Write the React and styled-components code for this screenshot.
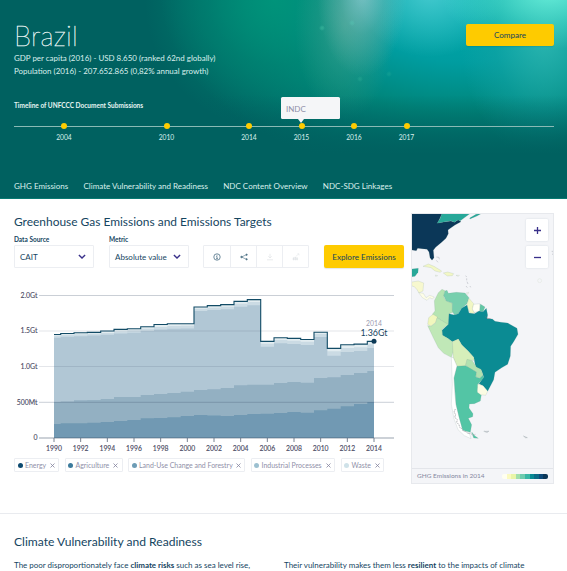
import React from "react";
import styled, { createGlobalStyle } from "styled-components";

const GlobalStyle = createGlobalStyle`
  * { box-sizing: border-box; }
  html, body { margin: 0; padding: 0; overflow: hidden; background: #fff; }
  body { font-family: Lato, "Open Sans", sans-serif; color: #15455f; }
`;

const Page = styled.div`
  width: 567px;
  height: 571px;
  overflow: hidden;
`;

const Header = styled.header`
  height: 199px;
  padding: 0 13px 0 14px;
  display: flex;
  flex-direction: column;
  color: #d9efec;
  border-bottom: 1px solid #077a72;
  background:
    radial-gradient(circle at 322px 28px, rgba(90, 215, 180, 0.3) 0 1px, transparent 3px),
    radial-gradient(circle at 352px 23px, rgba(90, 215, 190, 0.25) 0 1px, transparent 3px),
    radial-gradient(circle at 360px 79px, rgba(60, 190, 160, 0.25) 0 1px, transparent 3px),
    radial-gradient(circle at 389px 74px, rgba(60, 190, 160, 0.2) 0 1px, transparent 3px),
    linear-gradient(180deg, rgba(0, 97, 96, 0) 48%, rgba(0, 97, 96, 0.5) 63%, #006160 78%),
    radial-gradient(ellipse 110px 55px at 550px -6px, rgba(112, 245, 222, 0.85), rgba(80, 225, 205, 0.5) 55%, transparent),
    radial-gradient(ellipse 45px 85px at 362px -8px, rgba(150, 205, 212, 0.75), rgba(130, 190, 190, 0.35) 50%, transparent),
    radial-gradient(ellipse 75px 65px at 430px -8px, rgba(85, 210, 215, 0.8), transparent),
    radial-gradient(ellipse 85px 125px at 545px 35px, rgba(50, 185, 178, 0.85), rgba(20, 165, 165, 0.5) 60%, transparent),
    radial-gradient(ellipse 50px 95px at 345px 25px, rgba(60, 160, 140, 0.8), rgba(50, 155, 135, 0.4) 55%, transparent),
    radial-gradient(ellipse 130px 130px at 275px 0px, rgba(0, 148, 122, 0.95), rgba(0, 138, 115, 0.5) 50%, transparent),
    radial-gradient(ellipse 300px 190px at 460px -10px, #00acb0 0%, #009da0 38%, rgba(0, 138, 125, 0.85) 65%, transparent 100%),
    #006160;
`;

const Hero = styled.div`
  height: 84px;
  display: flex;
  justify-content: space-between;
  padding-top: 20px;
`;

const Country = styled.h1`
  margin: 0;
  font-size: 27.5px;
  line-height: 32px;
  font-weight: 200;
  letter-spacing: 0.3px;
  color: #e9f5f4;
  -webkit-text-stroke: 0.4px #e9f5f4;
`;

const Fact = styled.p`
  margin: 0;
  font-size: 7.95px;
  line-height: 13px;
  white-space: nowrap;
`;

const YellowButton = styled.button`
  width: ${(p) => p.$width}px;
  height: ${(p) => p.$height}px;
  margin: ${(p) => p.$margin || 0};
  padding: 0;
  border: 0;
  border-radius: 2px;
  background: #fecb00;
  color: #15455f;
  font: 400 8.1px Lato, sans-serif;
  box-shadow: 0 1px 1px rgba(0, 50, 50, 0.12);
`;

const TimelineTitle = styled.h2`
  margin: 17px 0 0;
  font-size: 6.5px;
  line-height: 9px;
  font-weight: 700;
  color: #e6f5f3;
`;

const Timeline = styled.div`
  height: 36px;
  margin-top: 16px;
  position: relative;
  &::before {
    content: "";
    display: block;
    border-top: 1px solid #8abab5;
  }
`;

const Milestone = styled.div`
  position: absolute;
  top: -3px;
  left: ${(p) => p.$x}px;
  width: 30px;
  margin-left: -15px;
  display: flex;
  flex-direction: column;
  align-items: center;
  font-size: 6.7px;
  line-height: 8px;
  gap: 4px;
  &::before {
    content: "";
    width: 6px;
    height: 6px;
    border-radius: 50%;
    background: #fecb00;
  }
`;

const Tooltip = styled.div`
  position: absolute;
  left: 267px;
  top: -29px;
  width: 59px;
  height: 22px;
  padding: 0 5px;
  border-radius: 1.5px;
  background: #f5f6f8;
  color: #8f8fa8;
  font-size: 8px;
  line-height: 24px;
  &::after {
    content: "";
    position: absolute;
    left: 17px;
    top: 22px;
    border: 3px solid transparent;
    border-top: 4px solid #f5f6f8;
    border-bottom: 0;
  }
`;

const Anchors = styled.nav`
  display: flex;
  gap: 15.2px;
  margin-top: 17px;
  font-size: 8.02px;
  line-height: 14px;
  white-space: nowrap;
`;

const Emissions = styled.section`
  height: 315px;
  padding: 14px 13px 0 14px;
  display: grid;
  grid-template-columns: 390px 143px;
  column-gap: 7px;
  border-bottom: 1px solid #e9ebef;
`;

const SectionTitle = styled.h2`
  margin: 0;
  font-size: ${(p) => p.$size}px;
  line-height: 18px;
  font-weight: 400;
  white-space: nowrap;
`;

const Controls = styled.div`
  display: flex;
  align-items: flex-end;
  height: 37px;
`;

const Field = styled.label`
  width: 80px;
  margin-right: 15px;
  font-size: 6.5px;
  line-height: 8px;
  font-weight: 700;
  &:nth-of-type(2) { margin-right: 14px; }
`;

const SelectBox = styled.div`
  height: 23px;
  margin-top: 1px;
  padding: 0 7px 0 5px;
  display: flex;
  justify-content: space-between;
  align-items: center;
  border: 1px solid #eceef2;
  border-radius: 1px;
  font-size: 8px;
  font-weight: 400;
`;

const IconBar = styled.div`
  width: 106px;
  height: 23px;
  display: grid;
  grid-template-columns: repeat(4, 1fr);
  border: 1px solid #eceef2;
  border-radius: 1px;
`;

const IconCell = styled.span`
  display: grid;
  place-items: center;
  border-left: ${(p) => (p.$first ? 0 : "1px solid #eceef2")};
  color: ${(p) => (p.$disabled ? "#e3e6e9" : "#4c7085")};
`;

const Chart = styled.svg`
  display: block;
  margin-top: 10px;
  width: 390px;
  height: 180px;
  overflow: visible;
`;

const Legend = styled.div`
  display: flex;
  gap: 5.5px;
`;

const Tag = styled.span`
  width: ${(p) => p.$w}px;
  height: 14px;
  flex: none;
  display: flex;
  align-items: center;
  padding: 0 3.5px 0 2.5px;
  border: 1px solid #eceef2;
  border-radius: 1px;
  color: #8f8fa8;
  font-size: 6.95px;
  white-space: nowrap;
  &::before {
    content: "";
    width: 5px;
    height: 5px;
    margin-right: 2.5px;
    border-radius: 50%;
    background: ${(p) => p.$color};
  }
  svg { margin-left: auto; }
`;

const MapPanel = styled.aside`
  position: relative;
  width: 143px;
  height: 271px;
  border: 1px solid #e7e9ed;
  background: #f4f5f8;
`;

const MapDrawing = styled.svg`
  display: block;
  width: 141px;
  height: 254px;
`;

const MapFooter = styled.div`
  height: 15px;
  display: flex;
  align-items: center;
  justify-content: space-between;
  padding: 0 5px 1px 5px;
  border-top: 1px solid #e3e5ea;
  color: #8488a0;
  font-size: 6.5px;
`;

const Scale = styled.div`
  display: flex;
  height: 5px;
  margin-top: 1px;
  border-radius: 2px;
  overflow: hidden;
`;

const Swatch = styled.i`
  width: 4.6px;
  background: ${(p) => p.$color};
`;

const ZoomControls = styled.div`
  position: absolute;
  top: 5px;
  right: 5px;
  display: flex;
  flex-direction: column;
  gap: 5px;
`;

const ZoomButton = styled.button`
  width: 22px;
  height: 22px;
  padding: 0;
  border: 0;
  border-radius: 1px;
  background: #fff;
  box-shadow: 0 0 2px rgba(17, 55, 80, 0.15);
  display: grid;
  place-items: center;
`;

const Vulnerability = styled.section`
  padding: 19px 14px 0;
`;

const Columns = styled.div`
  display: grid;
  grid-template-columns: 270px 1fr;
  margin-top: 8px;
  font-size: 7.97px;
  line-height: 13px;
  white-space: nowrap;
`;

const milestones = [
  ["2004", 50], ["2010", 152.5], ["2014", 235], ["2015", 287.5], ["2016", 340], ["2017", 392.5],
];

const total = [334.5, 333.5, 332.8, 332.4, 331, 329.4, 328.7, 326.7, 324.5, 323.8, 323.7, 307, 305.6, 304.6, 301.4, 299.6, 341.4, 337.8, 338.4, 339.5, 332.3, 348.4, 344.8, 344.1, 341.4];
const industry = [335.7, 334.8, 334.3, 333.8, 333, 331.5, 330.5, 328.7, 327, 326, 325.8, 308.8, 307.7, 306.8, 303.7, 302, 343.8, 340, 340.7, 341.8, 334, 351.3, 348, 347.2, 344.2];
const landUse = [337.7, 336.8, 336.2, 335.6, 334.8, 333.5, 332.7, 331, 329.5, 328.8, 328.5, 311, 310, 309.3, 306.7, 305.3, 346.7, 343.3, 344, 345, 337, 355.7, 352, 351, 348];
const agriculture = [402, 401.5, 400.3, 400, 399, 397, 397, 395, 394, 393, 391.7, 390, 389.3, 388, 385.3, 384.7, 384.7, 383, 382, 382.7, 378, 377.3, 375, 373, 371];
const energy = [424, 423.3, 423.3, 422.7, 422, 421, 420, 418.3, 418, 417.3, 416, 415, 415.5, 416, 415, 414, 413.7, 413, 412, 412.7, 410.3, 408.7, 406.3, 404, 402];

const YEAR = 320 / 24;
function stepLine(values) {
  return values.reduce((d, y, i) => {
    const start = 54 + Math.max(0, i - 0.5) * YEAR;
    const end = 54 + Math.min(24, i + 0.5) * YEAR;
    return `${d}${i ? "L" : "M"}${start.toFixed(1)} ${y}H${end.toFixed(1)}`;
  }, "");
}
const stepArea = (values) => `${stepLine(values)}V438H54Z`;

const layers = [
  [total, "#e3edf1"],
  [industry, "#cbdbe4"],
  [landUse, "#b1c7d5"],
  [agriculture, "#93b0c2"],
  [energy, "#7199b3"],
];

const gridLines = [["2.0Gt", 295.5], ["1.5Gt", 331], ["1.0Gt", 366.5], ["500Mt", 402.3], ["0", 438]];

const tags = [
  ["Energy", "#0d4a70", 45],
  ["Agriculture", "#3c7b9c", 58],
  ["Land-Use Change and Forestry", "#6d9cb5", 117],
  ["Industrial Processes", "#9cc0d0", 84.5],
  ["Waste", "#cfe2e9", 43.5],
];

const scaleColors = ["#fffff0", "#fbfac0", "#e9f5a8", "#a0dfac", "#6dcbae", "#38b6a5", "#078993", "#0b6a86", "#0d4a7a", "#0b3758"];

const lands = [
  ["#0b3758", "M12 17H104L90 46L112 42L130 40L140 44L152 36L160 42L142 52L128 62L121 67L122 78L115 92L102 104L84 119L77 128L79 150L73 158L67 150L64 133L58 125L42 123L30 122L26 129L12 127Z"],
  ["#27a899", "M103 17H188L172 29L158 39L150 37L140 44L130 39L112 42L88 47L97 33ZM186 31L205 20L222 17L208 25L187 34Z"],
  ["#27a899", "M12 184L32 182L31 194L22 206L12 207Z"],
  ["#f7f8cf", "M12 223L32 220L48 226L46 250L34 256L28 246L20 237L12 235Z"],
  ["#fdfde8", "M33 255L47 257L55 270L66 263L80 268L74 274L66 270L58 278L44 270Z"],
  ["#f2f7c5", "M46 176L62 169L79 176L102 190L98 194L82 190L70 180Z"],
  ["#f2f7c5", "M107 196L120 193L138 198L134 204L119 205Z"],
  ["#fdfde8", "M83 202L90 204L84 206ZM145 203L155 203L152 206ZM176 256L183 254L181 260Z"],
  ["#b5e4b2", "M92 255L103 245L112 249L108 268L116 280L134 286L136 314L124 318L122 354L104 340L88 330L74 320L82 310L80 279Z"],
  ["#77cfae", "M108 264L112 250L118 248L122 257L146 254L172 256L184 270L178 288L160 304L152 318L140 322L134 310L134 286L116 280Z"],
  ["#f1f7c4", "M184 272L198 288L194 304L201 316L188 318L180 300L178 290Z"],
  ["#fffff5", "M198 290L216 288L217 310L200 314L194 304Z"],
  ["#61c6a5", "M218 289L232 298L226 312L216 309Z"],
  ["#0b8b93", "M178 292L184 316L200 318L214 310L226 312L236 302L240 322L238 333L254 334L262 341L280 344L300 346L328 362L331 380L318 402L309 416L308 445L300 470L282 480L262 494L258 516L240 551L226 534L214 528L228 508L222 489L204 478L198 449L182 431L162 411L152 394L134 402L120 392L104 384L103 368L122 350L124 318L140 322L152 318L162 302Z"],
  ["#f1f7bd", "M63 330L76 320L90 328L84 344L70 356L60 350Z"],
  ["#c0e8b7", "M60 354L70 356L84 345L88 330L104 340L122 350L103 365L104 382L120 392L134 402L137 430L131 449L108 437L92 420L77 390Z"],
  ["#d6efba", "M134 402L152 394L162 411L182 431L198 449L200 458L178 458L174 475L148 476L137 450Z"],
  ["#b2e1b0", "M178 455L194 459L201 470L206 478L220 485L226 503L216 511L204 508L206 493L180 480L174 471Z"],
  ["#fff", "M131 449L137 450L148 476L139 511L141 555L145 590L154 625L164 660L186 680L190 693L170 684L151 666L139 633L131 590L134 530Z"],
  ["#53c5a5", "M148 476L174 474L206 493L204 508L216 512L226 503L228 510L212 528L210 550L221 562L218 580L200 588L185 589L184 601L196 618L195 627L182 632L192 651L188 674L165 668L154 628L145 590L139 511ZM192 673L202 685L212 692L198 691Z"],
  ["#fbfce3", "M210 529L226 534L240 551L234 563L219 561L209 554Z"],
  ["#e1e3e8", "M228 671L244 670L239 675ZM347 685L359 690L354 691Z"],
];

const Chevron = () => (
  <svg width="8" height="6" viewBox="0 0 8 6" fill="none" stroke="#39308a" strokeWidth="1.4">
    <path d="M.9 1l3.1 3.1L7.1 1" />
  </svg>
);

const Close = () => (
  <svg width="5" height="5" viewBox="0 0 5 5" stroke="#83839d" strokeWidth=".8">
    <path d="M.5.5l4 4M4.5.5l-4 4" />
  </svg>
);

const InfoIcon = () => (
  <svg width="8" height="8" viewBox="0 0 8 8" fill="none" stroke="currentColor" strokeWidth=".8">
    <circle cx="4" cy="4" r="3.2" />
    <path d="M3.3 3.5H4v2.2M3.2 5.7h1.7M4 1.9v.8" />
  </svg>
);

const ShareIcon = () => (
  <svg width="8" height="8" viewBox="0 0 8 8" fill="currentColor" stroke="currentColor" strokeWidth=".6">
    <path d="M6.5 1.7L1.5 4l5 2.3" fill="none" />
    <circle cx="6.6" cy="1.7" r=".7" />
    <circle cx="1.5" cy="4" r=".8" />
    <circle cx="6.6" cy="6.3" r=".7" />
  </svg>
);

const DownloadIcon = () => (
  <svg width="8" height="8" viewBox="0 0 8 8" fill="none" stroke="currentColor" strokeWidth=".8">
    <path d="M4 .8v4M2.3 3.3L4 5l1.7-1.7M1 6.8h6" />
  </svg>
);

const EditIcon = () => (
  <svg width="8" height="8" viewBox="0 0 8 8" fill="currentColor" stroke="currentColor" strokeWidth=".5">
    <path d="M1 7V4.8h1V7zM2.8 7V4h1V7zM4.6 7V4.8h1V7z" />
    <path d="M4 3.2L7 .8M5.3.8H7v1.6" fill="none" />
  </svg>
);

function EmissionsChart() {
  return (
    <Chart viewBox="14 278 390 180" fontFamily="Lato">
      {layers.map(([values, color]) => <path key={color} d={stepArea(values)} fill={color} />)}
      {gridLines.map(([label, y]) => (
        <g key={label}>
          <path d={`M39 ${y}H394`} stroke="#33475f" strokeOpacity={y === 331 || y === 366.5 ? 0.17 : 0.33} strokeWidth={y === 438 ? 1.4 : 0.8} />
          <text x="37.5" y={y + 2.3} textAnchor="end" fontSize="6.9" fill="#4a4a63" stroke="#4a4a63" strokeWidth=".1">{label}</text>
        </g>
      ))}
      {Array.from({ length: 13 }, (_, i) => {
        const x = 54 + i * YEAR * 2;
        return (
          <g key={i}>
            <path d={`M${x} 438v4`} stroke="#6a7483" strokeWidth=".9" />
            <text x={x} y="451" textAnchor="middle" fontSize="6.8" fill="#4a4a63" stroke="#4a4a63" strokeWidth=".12">{1990 + i * 2}</text>
          </g>
        );
      })}
      <path d={stepLine(total)} fill="none" stroke="#124b66" strokeWidth="1.1" />
      <circle cx="374" cy="341.2" r="2.5" fill="#0c3a57" />
      <text x="374" y="326" textAnchor="middle" fontSize="6.8" fill="#9b9bb0">2014</text>
      <text x="374" y="335.5" textAnchor="middle" fontSize="8.9" fill="#15455f" stroke="#fff" strokeOpacity=".6" strokeWidth="1.5" paintOrder="stroke">1.36Gt</text>
    </Chart>
  );
}

function EmissionsMap() {
  return (
    <MapPanel>
      <MapDrawing viewBox="13 19 423 762">
        <g stroke="#6e8a88" strokeWidth="1" strokeOpacity=".45" strokeLinejoin="round">
          {lands.map(([color, d]) => <path key={d} d={d} fill={color} />)}
        </g>
        <g fill="none" stroke="#a9adb5" strokeWidth="1.5">
          <path d="M86 148l8 1l1 6M86 158l5 6M174 204l3 4M177 212v6M178 222l3 7M175 235l4 5M187 235l2 4" />
          <path d="M143 604l-4 9l5 8l-3 8l8 7l-2 8l7 7l2 8l7 4l4 7l8 2l5 5l9 0l6 5l8-2" stroke="#a7aaaf" strokeWidth="2.5" strokeDasharray="5 2" />
          <path d="M230 670l5 3l8-2M348 685l4 3l7 2M432 131l5 0v7l-4 3" />
          <circle cx="396" cy="219" r="6" stroke="#dfe4dc" />
          <path d="M233 326l5 6l11 1" stroke="#7d6f78" />
        </g>
      </MapDrawing>
      <MapFooter>
        GHG Emissions in 2014
        <Scale>{scaleColors.map((c) => <Swatch key={c} $color={c} />)}</Scale>
      </MapFooter>
      <ZoomControls>
        {["M1 4.5h7M4.5 1v7", "M1 4.5h7"].map((d) => (
          <ZoomButton key={d}>
            <svg width="9" height="9" viewBox="0 0 9 9" stroke="#39308a" strokeWidth="1.3"><path d={d} /></svg>
          </ZoomButton>
        ))}
      </ZoomControls>
    </MapPanel>
  );
}

export default function App() {
  return (
    <Page>
      <GlobalStyle />
      <Header>
        <Hero>
          <div>
            <Country>Brazil</Country>
            <Fact>GDP per capita (2016) - USD 8.650 (ranked 62nd globally)</Fact>
            <Fact>Population (2016) - 207.652.865 (0,82% annual growth)</Fact>
          </div>
          <YellowButton $width={88} $height={22} $margin="4px 0 0">Compare</YellowButton>
        </Hero>
        <TimelineTitle>Timeline of UNFCCC Document Submissions</TimelineTitle>
        <Timeline>
          {milestones.map(([year, x]) => <Milestone key={year} $x={x}>{year}</Milestone>)}
          <Tooltip>INDC</Tooltip>
        </Timeline>
        <Anchors>
          <span>GHG Emissions</span>
          <span>Climate Vulnerability and Readiness</span>
          <span>NDC Content Overview</span>
          <span>NDC-SDG Linkages</span>
        </Anchors>
      </Header>
      <Emissions>
        <div>
          <SectionTitle $size={11.95}>Greenhouse Gas Emissions and Emissions Targets</SectionTitle>
          <Controls>
            <Field>Data Source<SelectBox>CAIT<Chevron /></SelectBox></Field>
            <Field>Metric<SelectBox>Absolute value<Chevron /></SelectBox></Field>
            <IconBar>
              <IconCell $first><InfoIcon /></IconCell>
              <IconCell><ShareIcon /></IconCell>
              <IconCell $disabled><DownloadIcon /></IconCell>
              <IconCell $disabled><EditIcon /></IconCell>
            </IconBar>
            <YellowButton $width={80} $height={23} $margin="0 0 0 auto">Explore Emissions</YellowButton>
          </Controls>
          <EmissionsChart />
          <Legend>
            {tags.map(([label, color, w]) => <Tag key={label} $color={color} $w={w}>{label}<Close /></Tag>)}
          </Legend>
        </div>
        <EmissionsMap />
      </Emissions>
      <Vulnerability>
        <SectionTitle $size={12.1}>Climate Vulnerability and Readiness</SectionTitle>
        <Columns>
          <span>The poor disproportionately face <b>climate risks</b> such as sea level rise,</span>
          <span>Their vulnerability makes them less <b>resilient</b> to the impacts of climate</span>
        </Columns>
      </Vulnerability>
    </Page>
  );
}
